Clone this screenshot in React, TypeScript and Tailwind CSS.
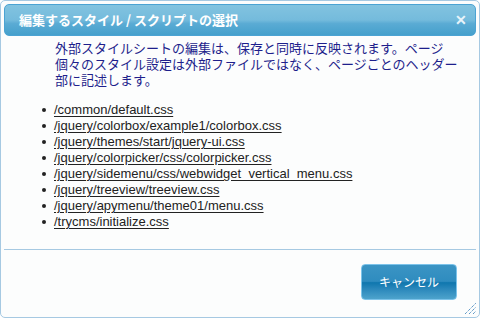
import React from "react";

const files = [
  "/common/default.css",
  "/jquery/colorbox/example1/colorbox.css",
  "/jquery/themes/start/jquery-ui.css",
  "/jquery/colorpicker/css/colorpicker.css",
  "/jquery/sidemenu/css/webwidget_vertical_menu.css",
  "/jquery/treeview/treeview.css",
  "/jquery/apymenu/theme01/menu.css",
  "/trycms/initialize.css",
];

export default function App() {
  return (
    <div className="w-[481px] h-[318px] bg-white">
      <div className="relative w-[480px] h-[318px] border border-[#a6c9e2] rounded-[5px] bg-[#fcfdfd] p-[3px] flex flex-col font-['Liberation_Sans','Noto_Sans_CJK_JP',sans-serif]">
        <div className="h-[32px] shrink-0 rounded-[5px] border border-[#4ba3d3] bg-[linear-gradient(to_bottom,#82c3e0_0%,#74bbdc_50%,#5aabd4_62%,#45a0cc_100%)] flex items-center justify-between pl-[14px] pr-[8px]">
          <span className="text-white font-bold text-[13px] tracking-[0px] font-['Noto_Sans_CJK_JP',sans-serif]">
            編集するスタイル / スクリプトの選択
          </span>
          <span className="text-[#e8f4fa] font-bold text-[14px] leading-none">✕</span>
        </div>
        <div className="flex-1 flex flex-col">
          <p className="mt-[4px] ml-[51px] w-[406px] text-[13px] leading-[16px] text-[#1e1f8c] font-['Noto_Sans_CJK_JP',sans-serif]">
            外部スタイルシートの編集は、保存と同時に反映されます。ページ個々のスタイル設定は外部ファイルではなく、ページごとのヘッダー部に記述します。
          </p>
          <ul className="mt-[14px] ml-[37px] flex flex-col">
            {files.map((f) => (
              <li key={f} className="flex items-center h-[16px]">
                <span className="w-[4px] h-[4px] rounded-full bg-[#222] mr-[8px] ml-[1px]" />
                <a href="#" className="text-[13px] leading-[16px] text-[#222] underline underline-offset-[2px]">
                  {f}
                </a>
              </li>
            ))}
          </ul>
        </div>
        <div className="h-[65px] shrink-0 border-t border-[#a6c9e2] flex items-center justify-end pr-[19px]">
          <button className="w-[96px] h-[36px] rounded-[4px] border border-[#7cc3ea] bg-[linear-gradient(to_bottom,#3b94c4_0%,#2f8cbf_48%,#0f77ae_52%,#2a87bb_70%,#4da3cc_100%)] text-white text-[12px] font-['Noto_Sans_CJK_JP',sans-serif]">
            キャンセル
          </button>
        </div>
        <svg className="absolute right-[2px] bottom-[2px]" width="13" height="13" viewBox="0 0 13 13">
          <g stroke="#1f6fb0" strokeWidth="1" strokeDasharray="1 1">
            <line x1="1" y1="12" x2="12" y2="1" />
            <line x1="5" y1="12" x2="12" y2="5" />
            <line x1="9" y1="12" x2="12" y2="9" />
          </g>
        </svg>
      </div>
    </div>
  );
}
